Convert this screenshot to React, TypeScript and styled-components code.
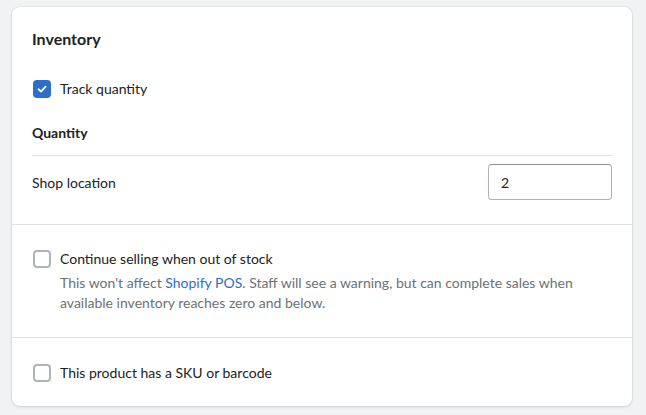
import React from "react";
import styled, { createGlobalStyle } from "styled-components";

const Global = createGlobalStyle`
  html, body { margin: 0; padding: 0; background: #f1f2f4; }
  body { font-family: "Lato", "Noto Sans", sans-serif; color: #202223; -webkit-font-smoothing: antialiased; }
`;

const Page = styled.div`
  padding: 7px 14px 10px 12px;
`;

const Card = styled.div`
  background: #ffffff;
  border-radius: 8px;
  box-shadow: 0 0 0 1px rgba(63, 63, 68, 0.05), 0 1px 3px 0 rgba(63, 63, 68, 0.15);
  overflow: hidden;
`;

const Section = styled.div<{ $top?: number; $bottom?: number }>`
  padding: ${(p) => p.$top ?? 20}px 20px ${(p) => p.$bottom ?? 20}px 20px;
  & + & { border-top: 1px solid #e1e3e5; }
`;

const Title = styled.h2`
  margin: 0;
  font-size: 16px;
  line-height: 24px;
  font-weight: 700;
`;

const CheckRow = styled.label`
  display: flex;
  align-items: flex-start;
  gap: 9px;
  font-size: 14px;
  line-height: 20px;
`;

const Box = styled.span<{ $checked?: boolean }>`
  flex: none;
  width: 18px;
  height: 18px;
  margin: 1px 0 0 1px;
  box-sizing: border-box;
  border-radius: 4px;
  display: flex;
  align-items: center;
  justify-content: center;
  background: ${(p) => (p.$checked ? "#2c6ecb" : "#fff")};
  border: ${(p) => (p.$checked ? "none" : "2px solid #aeb4b9")};
`;

const Texts = styled.div`
  display: flex;
  flex-direction: column;
  gap: 4px;
`;

const Help = styled.div`
  color: #6d7175;
  font-size: 14px;
  line-height: 20px;
`;

const Link = styled.span`
  color: #2c6ecb;
`;

const SubTitle = styled.h3`
  margin: 0;
  font-size: 14px;
  line-height: 20px;
  font-weight: 700;
  padding-bottom: 12px;
  border-bottom: 1px solid #e1e3e5;
`;

const LocationRow = styled.div`
  display: flex;
  justify-content: space-between;
  align-items: center;
  padding-top: 8px;
  font-size: 14px;
`;

const Input = styled.div`
  width: 124px;
  height: 36px;
  box-sizing: border-box;
  border: 1px solid #aeb4b9;
  border-top-color: #898f94;
  border-radius: 4px;
  padding: 0 12px;
  display: flex;
  align-items: center;
  font-size: 14px;
`;

const Gap = styled.div<{ $h: number }>`
  height: ${(p) => p.$h}px;
`;

const Check = () => (
  <svg width="12" height="12" viewBox="0 0 12 12" fill="none">
    <path d="M2.5 6.2L5 8.6L9.6 3.6" stroke="#fff" strokeWidth="1.8" strokeLinecap="round" strokeLinejoin="round" />
  </svg>
);

export default function App() {
  return (
    <>
      <Global />
      <Page>
        <Card>
          <Section $bottom={24}>
            <Title>Inventory</Title>
            <Gap $h={28} />
            <CheckRow>
              <Box $checked>
                <Check />
              </Box>
              Track quantity
            </CheckRow>
            <Gap $h={24} />
            <SubTitle>Quantity</SubTitle>
            <LocationRow>
              <span>Shop location</span>
              <Input>2</Input>
            </LocationRow>
          </Section>
          <Section $top={24} $bottom={24}>
            <CheckRow>
              <Box />
              <Texts>
                <span>Continue selling when out of stock</span>
                <Help>
                  This won't affect <Link>Shopify POS</Link>. Staff will see a warning, but can complete sales when
                  available inventory reaches zero and below.
                </Help>
              </Texts>
            </CheckRow>
          </Section>
          <Section $top={25} $bottom={23}>
            <CheckRow>
              <Box />
              <span>This product has a SKU or barcode</span>
            </CheckRow>
          </Section>
        </Card>
      </Page>
    </>
  );
}
